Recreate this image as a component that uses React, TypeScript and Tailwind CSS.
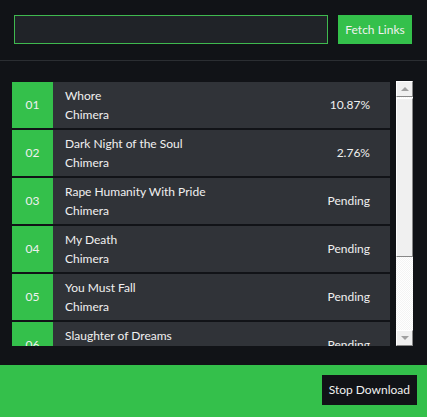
import React from 'react'

const tracks = [
  { no: '01', title: 'Whore', artist: 'Chimera', status: '10.87%' },
  { no: '02', title: 'Dark Night of the Soul', artist: 'Chimera', status: '2.76%' },
  { no: '03', title: 'Rape Humanity With Pride', artist: 'Chimera', status: 'Pending' },
  { no: '04', title: 'My Death', artist: 'Chimera', status: 'Pending' },
  { no: '05', title: 'You Must Fall', artist: 'Chimera', status: 'Pending' },
  { no: '06', title: 'Slaughter of Dreams', artist: 'Chimera', status: 'Pending' },
]

function TrackRow({ no, title, artist, status }: (typeof tracks)[number]) {
  return (
    <div className="flex h-[46px] shrink-0">
      <div className="w-[41px] bg-[#34c04b] flex items-center justify-center text-[12px] text-[#f0f0f0]">
        {no}
      </div>
      <div className="flex-1 bg-[#303338] flex items-center pl-3 pr-5">
        <div className="flex-1 flex flex-col leading-[19px] text-[12px] text-[#f0f0f0]">
          <span>{title}</span>
          <span>{artist}</span>
        </div>
        <span className="text-[12px] text-[#f0f0f0]">{status}</span>
      </div>
    </div>
  )
}

function Scrollbar() {
  return (
    <div className="w-[17px] h-[265px] -mt-px flex flex-col bg-[repeating-conic-gradient(#f4f4f4_0_25%,#ffffff_0_50%)] bg-[length:2px_2px]">
      <div className="h-[16px] bg-[#f0f0f0] border border-[#fff] border-r-[#888] border-b-[#888] flex items-center justify-center">
        <div className="w-0 h-0 border-x-[4px] border-x-transparent border-b-[4px] border-b-[#a0a0a0]" />
      </div>
      <div className="h-[159px] mt-px bg-[#f0f0f0] border border-[#fff] border-r-[#888] border-b-[#888]" />
      <div className="flex-1" />
      <div className="h-[16px] bg-[#f0f0f0] border border-[#fff] border-r-[#888] border-b-[#888] flex items-center justify-center">
        <div className="w-0 h-0 border-x-[4px] border-x-transparent border-t-[4px] border-t-[#a0a0a0]" />
      </div>
    </div>
  )
}

export default function App() {
  return (
    <div className="w-[427px] h-[417px] bg-[#111317] flex flex-col font-['Lato','Noto_Sans',sans-serif]">
      {/* url + fetch */}
      <div className="h-[61px] shrink-0 flex items-start pt-[15px] pl-[14px] pr-[15px] gap-[10px] border-b border-[#2b2e32]">
        <input className="w-[314px] h-[29px] bg-[#202328] border border-[#3fb94f] outline-none" />
        <button className="w-[74px] h-[29px] bg-[#34c04b] text-[12px] text-[#f0f0f0]">Fetch Links</button>
      </div>

      {/* track list */}
      <div className="flex pt-[21px] pl-[12px] gap-[6px]">
        <div className="w-[378px] h-[264px] overflow-hidden flex flex-col gap-[2px]">
          {tracks.map((t) => (
            <TrackRow key={t.no} {...t} />
          ))}
        </div>
        <Scrollbar />
      </div>

      {/* footer */}
      <div className="mt-auto h-[52px] bg-[#34c04b] flex items-center justify-end pr-[10px]">
        <button className="h-[30px] px-[7px] -mt-[2px] bg-[#111317] text-[12px] text-[#f0f0f0]">Stop Download</button>
      </div>
    </div>
  )
}
